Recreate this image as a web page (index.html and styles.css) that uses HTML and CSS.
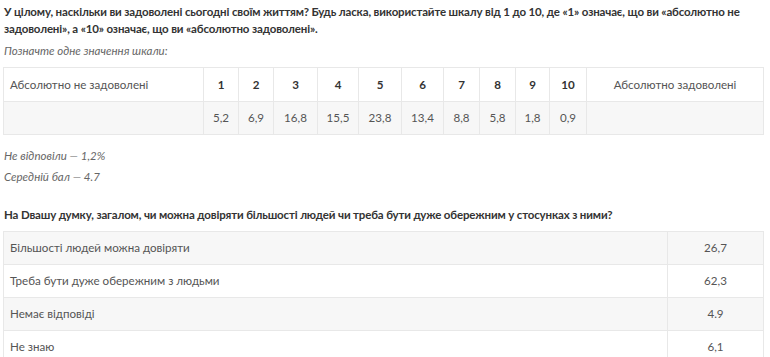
FILE: index.html
```html
<!DOCTYPE html>
<html lang="uk">
<head>
<meta charset="utf-8">
<title>Опитування</title>
<link rel="stylesheet" href="styles.css">
</head>
<body>
<div class="page">
  <p class="question">У цілому, наскільки ви задоволені сьогодні своїм життям? Будь ласка, використайте шкалу від 1 до 10, де «1» означає, що ви «абсолютно не задоволені», а «10» означає, що ви «абсолютно задоволені».</p>
  <p class="note first-note">Позначте одне значення шкали:</p>
  <table class="scale">
    <colgroup>
      <col class="w-label"><col class="w35"><col class="w35"><col class="w44"><col class="w41"><col class="w43"><col class="w42"><col class="w36"><col class="w36"><col class="w34"><col class="w37"><col class="w-end">
    </colgroup>
    <tr class="head">
      <td class="left">Абсолютно не задоволені</td>
      <td class="num">1</td><td class="num">2</td><td class="num">3</td><td class="num">4</td><td class="num">5</td><td class="num">6</td><td class="num">7</td><td class="num">8</td><td class="num">9</td><td class="num">10</td>
      <td class="center">Абсолютно задоволені</td>
    </tr>
    <tr class="shade">
      <td></td>
      <td class="center">5,2</td><td class="center">6,9</td><td class="center">16,8</td><td class="center">15,5</td><td class="center">23,8</td><td class="center">13,4</td><td class="center">8,8</td><td class="center">5,8</td><td class="center">1,8</td><td class="center">0,9</td>
      <td></td>
    </tr>
  </table>
  <p class="note foot-first">Не відповіли — 1,2%</p>
  <p class="note foot">Середній бал — 4.7</p>
  <p class="question q2">На Dвашу думку, загалом, чи можна довіряти більшості людей чи треба бути дуже обережним у стосунках з ними?</p>
  <table class="answers">
    <colgroup><col class="w-answer"><col class="w-value"></colgroup>
    <tr class="shade"><td class="left">Більшості людей можна довіряти</td><td class="center">26,7</td></tr>
    <tr><td class="left">Треба бути дуже обережним з людьми</td><td class="center">62,3</td></tr>
    <tr class="shade"><td class="left">Немає відповіді</td><td class="center">4.9</td></tr>
    <tr><td class="left">Не знаю</td><td class="center">6,1</td></tr>
  </table>
</div>
</body>
</html>
```
FILE: styles.css
```css
html, body {
  margin: 0;
  padding: 0;
  background: #fff;
}
.page {
  padding: 3px 6px 0 3px;
  font-family: Lato, "Open Sans", sans-serif;
  color: #444;
}
.question {
  margin: 0 0 0 1px;
  font-size: 11.5px;
  letter-spacing: -0.15px;
  line-height: 17px;
  font-weight: 700;
  color: #333;
}
.note {
  margin: 0 0 0 1px;
  font-size: 11.5px;
  line-height: 17px;
  font-style: italic;
  color: #666;
}
.first-note {
  margin-top: 5px;
}
.foot-first {
  margin-top: 12px;
}
.foot {
  margin-top: 4px;
}
.q2 {
  margin-top: 21px;
}
table {
  border-collapse: collapse;
  table-layout: fixed;
  width: 761px;
  font-size: 11.6px;
  line-height: 17px;
  color: #555;
}
td {
  border: 1px solid #e8e8e8;
  padding: 7px 6px 8px;
  vertical-align: top;
}
.scale {
  margin-top: 8px;
}
.scale tr.head td {
  padding-top: 8px;
}
.answers {
  margin-top: 8px;
}
.shade td {
  background: #f7f7f7;
}
.left { text-align: left; }
.center { text-align: center; }
.num {
  text-align: center;
  font-weight: 700;
  color: #333;
}
.w-label { width: 200px; }
.w35 { width: 35px; }
.w44 { width: 44px; }
.w41 { width: 41px; }
.w43 { width: 43px; }
.w42 { width: 42px; }
.w36 { width: 36px; }
.w34 { width: 34px; }
.w37 { width: 37px; }
.w-end { width: 177px; }
.w-answer { width: 664px; }
.w-value { width: 96px; }
```
